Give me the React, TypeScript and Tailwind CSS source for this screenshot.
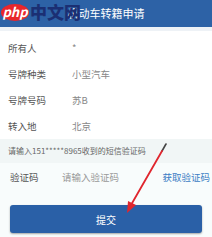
import React from "react";

const rows = [
  { label: "所有人", value: "*" },
  { label: "号牌种类", value: "小型汽车" },
  { label: "号牌号码", value: "苏B" },
  { label: "转入地", value: "北京" },
];

const App = () => {
  return (
    <div
      className="relative w-[212px] h-[237px] overflow-hidden bg-white"
      style={{ fontFamily: '"Noto Sans CJK SC", "Noto Sans", sans-serif' }}
    >
      <div className="h-[27px] bg-[#2d62a6] flex items-center justify-center text-white text-[11px]">
        机动车转籍申请
      </div>
      <div className="h-[4px] bg-[#eef2f6]" />

      <div className="pt-[4px]">
        {rows.map((r) => (
          <div key={r.label} className="h-[26px] flex items-center text-[9.5px]">
            <span className="w-[72px] pl-[8px] text-[#555]">{r.label}</span>
            <span className="text-[#888]">{r.value}</span>
          </div>
        ))}
      </div>

      <div className="h-[24px] bg-[#f1f6f6] flex items-center pl-[8px] text-[8px] text-[#666]">
        请输入151*****8965收到的短信验证码
      </div>

      <div className="h-[28px] bg-[#f8fcfc] flex items-center text-[9.5px]">
        <span className="w-[62px] pl-[10px] text-[#555]">验证码</span>
        <span className="flex-1 text-[#999]">请输入验证码</span>
        <span className="pr-[2px] text-[#3b7cc4]">获取验证码</span>
      </div>

      <div className="bg-[#f8fcfc] pt-[14px] pb-[4px] px-[10px]">
        <div className="h-[28px] rounded-[3px] bg-[#2a60a7] shadow-[0_1px_2px_rgba(0,0,0,0.35)] flex items-center justify-center text-white text-[10px]">
          提交
        </div>
      </div>

      {/* php中文网 watermark */}
      <div className="absolute left-[1px] top-[2px] h-[20px] flex items-center">
        <div className="w-[28px] h-[17px] rounded-[50%] bg-[#e8262b] flex items-center justify-center text-white italic font-bold text-[13px] leading-none pb-[2px]">
          php
        </div>
        <span className="ml-[1px] text-[#1b2f73] font-black text-[17px] leading-[20px]">中文网</span>
      </div>

      {/* red arrow */}
      <svg className="absolute left-0 top-0" width="212" height="237" viewBox="0 0 212 237">
        <line x1="166" y1="144" x2="162" y2="151" stroke="#444" strokeWidth="1.6" strokeLinecap="round" />
        <line x1="162" y1="151" x2="131" y2="205" stroke="#e0262e" strokeWidth="1.8" strokeLinecap="round" />
        <polygon points="127,213 128,201 136,205" fill="#e0262e" />
      </svg>
    </div>
  );
};

export default App;
